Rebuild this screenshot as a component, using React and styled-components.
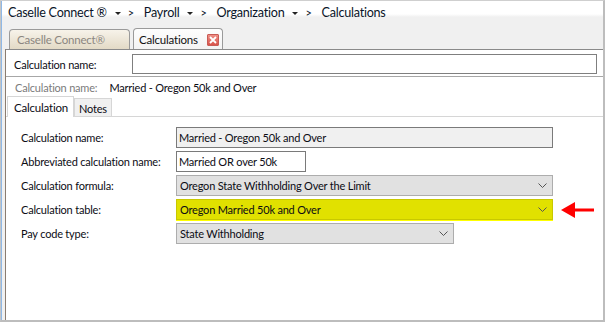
import React from "react";
import styled, { createGlobalStyle } from "styled-components";

const GlobalStyle = createGlobalStyle`
  html, body {
    margin: 0;
    padding: 0;
    background: #ffffff;
  }
  body {
    font-family: Lato, "Open Sans", sans-serif;
    font-size: 11px;
    letter-spacing: -0.2px;
    color: #0c0c14;
  }
  * {
    box-sizing: border-box;
  }
`;

const Frame = styled.div`
  width: 605px;
  height: 322px;
  display: flex;
  flex-direction: column;
  border-top: 1px solid #cfcfcf;
  border-right: 2px solid #bdbdbd;
  border-bottom: 2px solid #bdbdbd;
  border-left: 1px solid #c4c4c4;
  box-shadow: inset 1px 0 0 #8fb8e6;
  background: linear-gradient(#ffffff 0, #ffffff 13px, #f0f0f0 16px, #f0f0f0 100%);
  overflow: hidden;
`;

const Breadcrumb = styled.div`
  display: flex;
  align-items: center;
  height: 24px;
  padding: 0 0 1px 7px;
  font-size: 12.6px;
  letter-spacing: -0.25px;
  color: #0a1428;
`;

const Crumb = styled.span`
  white-space: nowrap;
`;

const Caret = styled.span`
  width: 0;
  height: 0;
  margin: 2px 7px 0 8px;
  border-left: 3px solid transparent;
  border-right: 3px solid transparent;
  border-top: 3px solid #222;
`;

const Sep = styled.span`
  font-size: 11px;
  margin-right: 10px;
`;

const TabStrip = styled.div`
  display: flex;
  align-items: flex-end;
  gap: 3px;
  height: 24px;
  padding-left: 8px;
`;

const DocTab = styled.div`
  display: flex;
  align-items: center;
  height: ${(p) => (p.$active ? "21px" : "20px")};
  padding: 0 ${(p) => (p.$active ? "3px" : "8px")} 0 ${(p) => (p.$active ? "5px" : "7px")};
  width: ${(p) => p.$width}px;
  border: 1px solid #9a9a9a;
  border-bottom: none;
  border-radius: 4px 4px 0 0;
  font-size: 11.5px;
  white-space: nowrap;
  color: ${(p) => (p.$active ? "#111" : "#8b8680")};
  background: ${(p) =>
    p.$active
      ? "linear-gradient(#fdfdfd, #f3f3f3)"
      : "linear-gradient(#f7f3ea, #e3dac6)"};
`;

const CloseBox = styled.span`
  display: flex;
  align-items: center;
  justify-content: center;
  width: 12px;
  height: 12px;
  margin-left: auto;
  margin-top: 1px;
  border: 1px solid #c95b55;
  background: linear-gradient(#ee8f86, #d9534a);
  border-radius: 1px;
`;

const Panel = styled.div`
  flex: 1;
  margin-left: 4px;
  display: flex;
  flex-direction: column;
  background: #ffffff;
  border-top: 1px solid #8a8a8a;
  border-left: 1px solid #8a7c70;
`;

const SearchRow = styled.div`
  display: flex;
  align-items: center;
  height: 27px;
  padding: 2px 6px 0 8px;
  border-bottom: 1px solid #a7a7a7;
`;

const SearchLabel = styled.span`
  width: 118px;
`;

const SearchInput = styled.div`
  flex: 1;
  height: 20px;
  border: 1px solid #7f7f7f;
  background: #fff;
`;

const Summary = styled.div`
  display: flex;
  align-items: center;
  gap: 12px;
  height: 20px;
  padding: 0 0 0 9px;
`;

const SummaryLabel = styled.span`
  color: #7b7b7b;
`;

const SubTabs = styled.div`
  display: flex;
  align-items: flex-end;
  height: 20px;
  padding-left: 1px;
  border-bottom: 1px solid #d6d6d6;
`;

const SubTab = styled.div`
  display: flex;
  align-items: center;
  height: ${(p) => (p.$active ? "21px" : "18px")};
  margin-bottom: ${(p) => (p.$active ? "-1px" : "0")};
  padding: ${(p) => (p.$active ? "0 0 0 6px" : "2px 0 0 4px")};
  width: ${(p) => p.$width}px;
  border: 1px solid #d6d6d6;
  border-bottom: none;
  background: ${(p) => (p.$active ? "#ffffff" : "#f0f0f0")};
  font-size: ${(p) => (p.$active ? "11.5px" : "11px")};
`;

const Form = styled.div`
  display: grid;
  grid-template-columns: 155px auto;
  row-gap: 3px;
  padding: 10px 0 0 15px;
  align-items: center;
`;

const Label = styled.span`
  white-space: nowrap;
`;

const FieldCell = styled.div`
  display: flex;
  align-items: center;
  height: 21px;
`;

const TextBox = styled.div`
  display: flex;
  align-items: center;
  width: ${(p) => p.$width}px;
  height: 21px;
  padding-left: 2px;
  border: 1px solid #7a7a7a;
  background: ${(p) => (p.$readOnly ? "#f0f0f0" : "#ffffff")};
`;

const Combo = styled.div`
  display: flex;
  align-items: center;
  justify-content: space-between;
  width: ${(p) => p.$width}px;
  height: 21px;
  padding: 0 5px 0 3px;
  border: 1px solid ${(p) => (p.$highlight ? "#c8c800" : "#adadad")};
  background: ${(p) => (p.$highlight ? "#e1e100" : "#e1e1e1")};
  box-shadow: ${(p) => (p.$highlight ? "0 1px 0 #ffff00" : "none")};
`;

const ArrowWrap = styled.span`
  display: flex;
  margin-left: 8px;
`;

function Chevron() {
  return (
    <svg width="9" height="6" viewBox="0 0 9 6">
      <polyline points="0.5,0.5 4.5,4.5 8.5,0.5" fill="none" stroke="#555" strokeWidth="1" />
    </svg>
  );
}

function CloseIcon() {
  return (
    <svg width="8" height="8" viewBox="0 0 8 8">
      <path d="M1 1 L7 7 M7 1 L1 7" stroke="#fff" strokeWidth="1.8" />
    </svg>
  );
}

function RedArrow() {
  return (
    <svg width="34" height="18" viewBox="0 0 34 18">
      <polygon points="0,9 14,1 14,7.5 33,7.5 33,10.5 14,10.5 14,17" fill="#ff0000" />
    </svg>
  );
}

const crumbs = ["Caselle Connect ®", "Payroll", "Organization"];

export default function App() {
  return (
    <>
      <GlobalStyle />
      <Frame>
        <Breadcrumb>
          {crumbs.map((c) => (
            <React.Fragment key={c}>
              <Crumb>{c}</Crumb>
              <Caret />
              <Sep>&gt;</Sep>
            </React.Fragment>
          ))}
          <Crumb>Calculations</Crumb>
        </Breadcrumb>
        <TabStrip>
          <DocTab $width={121}>Caselle Connect®</DocTab>
          <DocTab $active $width={90}>
            Calculations
            <CloseBox>
              <CloseIcon />
            </CloseBox>
          </DocTab>
        </TabStrip>
        <Panel>
          <SearchRow>
            <SearchLabel>Calculation name:</SearchLabel>
            <SearchInput />
          </SearchRow>
          <Summary>
            <SummaryLabel>Calculation name:</SummaryLabel>
            <span>Married - Oregon 50k and Over</span>
          </Summary>
          <SubTabs>
            <SubTab $active $width={67}>Calculation</SubTab>
            <SubTab $width={38}>Notes</SubTab>
          </SubTabs>
          <Form>
            <Label>Calculation name:</Label>
            <FieldCell>
              <TextBox $readOnly $width={377}>Married - Oregon 50k and Over</TextBox>
            </FieldCell>

            <Label>Abbreviated calculation name:</Label>
            <FieldCell>
              <TextBox $width={130}>Married OR over 50k</TextBox>
            </FieldCell>

            <Label>Calculation formula:</Label>
            <FieldCell>
              <Combo $width={377}>
                Oregon State Withholding Over the Limit
                <Chevron />
              </Combo>
            </FieldCell>

            <Label>Calculation table:</Label>
            <FieldCell>
              <Combo $highlight $width={377}>
                Oregon Married 50k and Over
                <Chevron />
              </Combo>
              <ArrowWrap>
                <RedArrow />
              </ArrowWrap>
            </FieldCell>

            <Label>Pay code type:</Label>
            <FieldCell>
              <Combo $width={278}>
                State Withholding
                <Chevron />
              </Combo>
            </FieldCell>
          </Form>
        </Panel>
      </Frame>
    </>
  );
}
